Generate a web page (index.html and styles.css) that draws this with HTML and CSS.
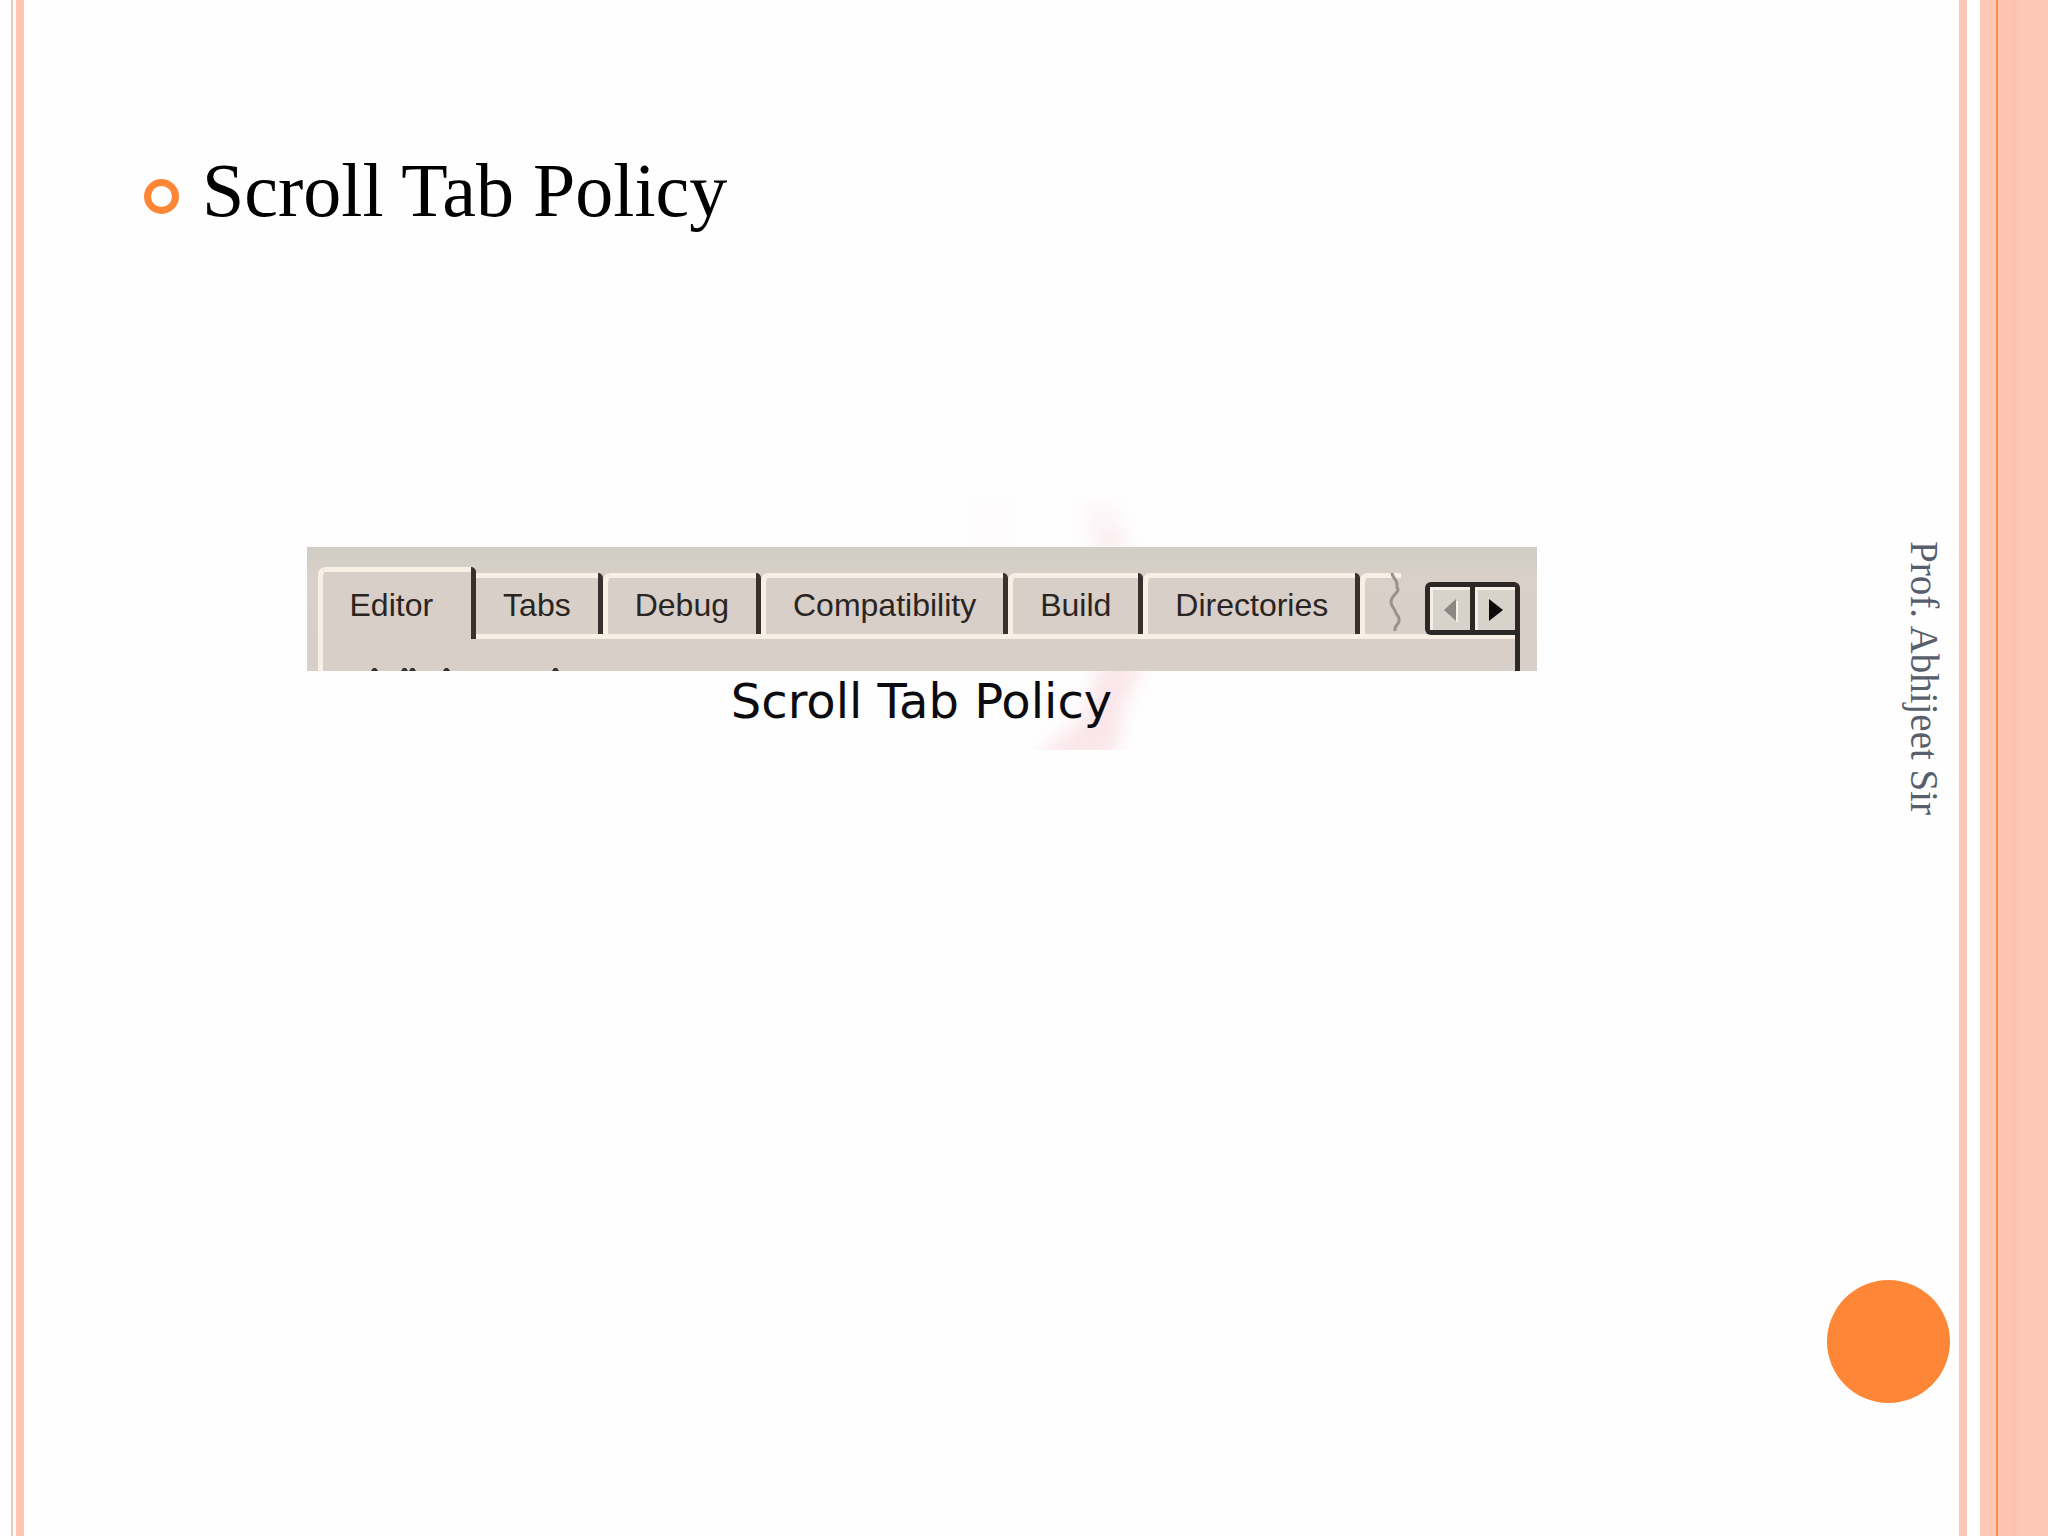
FILE: index.html
```html
<!DOCTYPE html>
<html lang="en">
<head>
    <meta charset="UTF-8">
    <meta name="viewport" content="width=device-width, initial-scale=1.0">
    <title>Scroll Tab Policy</title>
    <link rel="stylesheet" href="styles.css">
</head>
<body>
    <div class="slide">
        <div class="rail rail-left"></div>

        <main class="content">
            <h1><span class="bullet"></span>Scroll Tab Policy</h1>

            <figure class="example">
                <svg class="smear" viewBox="0 0 240 270" aria-hidden="true">
                    <defs>
                        <filter id="soft" x="-20%" y="-20%" width="140%" height="140%">
                            <feGaussianBlur stdDeviation="9"/>
                        </filter>
                    </defs>
                    <g filter="url(#soft)">
                        <path d="M30 22h42v45H30z" fill="#fefbfd"/>
                        <path d="M140 24h36l14 43h-45z" fill="#fdf5f8"/>
                        <path d="M160 56h18l6 11h-20z" fill="#f4e0e0"/>
                        <path d="M160 180h44l-22 50-8 50H90l50-40z" fill="#fae6ea"/>
                    </g>
                </svg>

                <div class="dialog">
                    <div class="tab-row">
                        <div class="tabs" role="tablist">
                            <button class="tab active" role="tab" aria-selected="true">Editor</button>
                            <button class="tab" role="tab">Tabs</button>
                            <button class="tab" role="tab">Debug</button>
                            <button class="tab" role="tab">Compatibility</button>
                            <button class="tab" role="tab">Build</button>
                            <button class="tab" role="tab">Directories</button>
                            <div class="tab-cut">
                                <svg width="12" height="60" viewBox="0 0 12 60" aria-hidden="true">
                                    <path d="M3 0c0 5 6 7 5 12s3 3 0 7-6 5-6 10 3 5 4 9 5 5 4 10-5 4-4 10" fill="none" stroke="#97928c" stroke-width="3"/>
                                </svg>
                            </div>
                        </div>
                        <div class="scroller">
                            <button class="scroll-btn" aria-label="Scroll left" disabled>
                                <svg width="14" height="24" viewBox="0 0 14 24"><path d="M14 3v21L12 24V3z" fill="#f7f1ea"/><path d="M12 1v22L0 12z" fill="#8b8883"/></svg>
                            </button>
                            <button class="scroll-btn" aria-label="Scroll right">
                                <svg width="14" height="24" viewBox="0 0 14 24"><path d="M0 1v22l14-11z" fill="#0c0b0a"/></svg>
                            </button>
                        </div>
                    </div>
                    <div class="panel">
                        <!-- tops of the first option's letters, cut off by the panel edge -->
                        <svg width="200" height="4" viewBox="0 0 200 4" aria-hidden="true">
                            <path d="M0 4l2-3h3l2 3zM30 4l2-3h3l2 3zM38 4l2-3h3l2 3zM72 4l2-3h3l2 3zM181 4l2-3h3l2 3z" fill="#3a3430"/>
                        </svg>
                    </div>
                </div>
                <figcaption>Scroll Tab Policy</figcaption>
            </figure>
        </main>

        <aside class="side">
            <p class="author">Prof. Abhijeet Sir</p>
            <div class="dot"></div>
        </aside>

        <div class="rail rail-inner"></div>
        <div class="rail rail-right"></div>
    </div>
</body>
</html>
```

FILE: styles.css
```css
* {
    box-sizing: border-box;
}
body {
    margin: 0;
    background-color: #fefefe;
    color: #000;
    font-family: "Liberation Serif", serif;
}
.slide {
    display: flex;
    min-height: 100vh;
}

/* Stripes down both edges */
.rail {
    flex: none;
}
.rail-left {
    width: 24px;
    background: linear-gradient(to right, #fefefe 11px, #f0cbb2 11px 13px, #fefefe 13px 16px, #ffc5b2 16px);
}
.rail-inner {
    width: 8px;
    margin-right: 13px;
    background-color: #fcc7b8;
}
.rail-right {
    width: 68px;
    background: linear-gradient(to right, #fec8b6 16px, #fb8b47 16px 18px, #fdc5b0 18px 32px, #fdc0aa 34px, #fec8b6 38px);
}

.content {
    flex: 1;
    padding: 145px 128px 0 120px;
}
h1 {
    display: flex;
    align-items: center;
    gap: 23px;
    margin: 0;
    font-size: 76px;
    font-weight: 400;
    line-height: 90px;
}
.bullet {
    width: 35px;
    height: 35px;
    margin-top: 12px;
    border: 7px solid #fe8637;
    border-radius: 50%;
}

.example {
    position: relative;
    max-width: 1230px;
    margin: 312px auto 0;
}
.smear {
    position: absolute;
    top: -67px;
    left: 634px;
    width: 240px;
    height: 270px;
}
.dialog {
    position: relative;
    padding: 20px 17px 0 11px;
    background: linear-gradient(#d0cec6, #d8d0c9 30px, #d8cfc8);
}
.tab-row {
    display: flex;
    justify-content: space-between;
    align-items: flex-end;
}
.tabs {
    display: flex;
    align-items: flex-end;
}
.tab {
    height: 61px;
    padding: 3px 27px 0;
    border: solid #f8efe5;
    border-width: 0 5px;
    border-right-color: #38322e;
    border-radius: 7px 5px 0 0;
    box-shadow: inset 0 5px #f8efe5;
    background-color: #d8cfc8;
    color: #2a2522;
    font-family: "Liberation Sans", sans-serif;
    font-size: 32px;
    line-height: 48px;
}
.tab.active {
    position: relative;
    height: 72px;
    margin-bottom: -5px;
    padding: 3px 38px 0 27px;
}
.active + .tab {
    border-left: 0;
    border-radius: 0 5px 0 0;
}
.tab-cut {
    display: flex;
    height: 61px;
    padding-left: 24px;
    border-left: 5px solid #f8efe5;
    border-radius: 7px 0 0 0;
    box-shadow: inset 0 5px #f8efe5;
}
.scroller {
    position: relative;
    display: flex;
    gap: 5px;
    height: 53px;
    margin-bottom: -1px;
    padding: 5px;
    border-radius: 6px 6px 0 6px;
    background-color: #2c2826;
}
.scroll-btn {
    display: flex;
    align-items: center;
    justify-content: center;
    width: 40px;
    padding: 0;
    border: solid #f4eee7;
    border-width: 3px 0 0 3px;
    background-color: #d8d2ca;
}
.panel {
    display: flex;
    align-items: flex-end;
    height: 37px;
    padding-left: 48px;
    border: solid #f8efe5;
    border-width: 0 5px;
    border-right-color: #2c2826;
    box-shadow: inset 0 5px #f8efe5;
}
figcaption {
    position: relative;
    color: #0c0c10;
    font-family: "DejaVu Sans", sans-serif;
    font-size: 48px;
    line-height: 60px;
    text-align: center;
}

.side {
    display: flex;
    flex-direction: column;
    align-items: flex-end;
    width: 132px;
    padding: 541px 9px 0 0;
}
.author {
    height: 280px;
    margin: 0 4px 0 0;
    color: #575f6d;
    font-size: 39px;
    line-height: 44px;
    white-space: nowrap;
    writing-mode: vertical-rl;
}
.dot {
    width: 123px;
    height: 123px;
    margin-top: 459px;
    border-radius: 50%;
    background-color: #fe8637;
}
```
